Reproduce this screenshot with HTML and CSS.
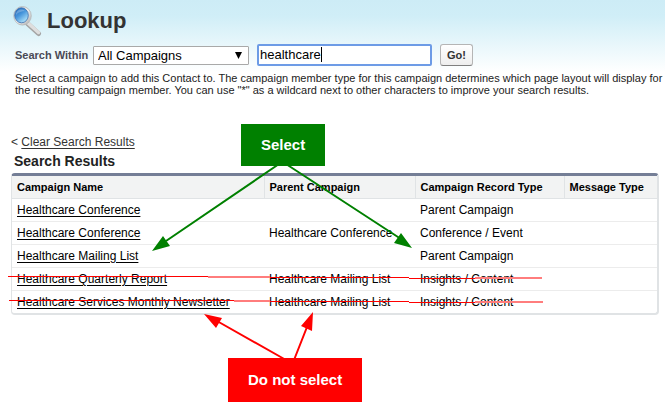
FILE: index.html
```html
<!DOCTYPE html>
<html lang="en">
<head>
<meta charset="utf-8">
<meta name="viewport" content="width=device-width, initial-scale=1">
<title>Lookup</title>
<link rel="stylesheet" href="styles.css">
</head>
<body>
<header class="lookup">
  <div class="title-row">
    <svg class="lens" viewBox="0 0 32 32" aria-hidden="true">
      <defs>
        <linearGradient id="glass" x1="0" y1="0" x2="0.7" y2="1">
          <stop offset="0" stop-color="#1c5fb0"/>
          <stop offset="0.5" stop-color="#4796dc"/>
          <stop offset="1" stop-color="#b4e6fa"/>
        </linearGradient>
        <linearGradient id="metal" x1="0" y1="0" x2="1" y2="1">
          <stop offset="0" stop-color="#c8ccd0"/>
          <stop offset="0.5" stop-color="#f0f0f0"/>
          <stop offset="1" stop-color="#a8a8a8"/>
        </linearGradient>
      </defs>
      <path d="M16 19 26.500 28.500" stroke="#a4a4a4" stroke-width="5" stroke-linecap="round"/>
      <path d="M16 18 26.500 27.500" stroke="#dedede" stroke-width="3.500" stroke-linecap="round"/>
      <ellipse cx="10.500" cy="10.800" rx="8.800" ry="9.300" fill="url(#metal)" stroke="#b4b6b8" stroke-width=".8"/>
      <ellipse cx="9.500" cy="10.300" rx="6.800" ry="7.500" fill="url(#glass)" stroke="#3b6fb0" stroke-width=".8"/>
      <path d="M4 10C4 5 9 3 13 6 10 6 6 7 4 10Z" fill="#fff" opacity=".25"/>
    </svg>
    <h1>Lookup</h1>
  </div>
  <form class="search">
    <label for="scope">Search Within</label>
    <span class="select-wrap">
      <select id="scope"><option>All Campaigns</option></select>
      <svg class="caret" viewBox="0 0 8 7" aria-hidden="true"><path d="M0 0h7L3.500 7Z"/></svg>
    </span>
    <input class="query" type="text" value="healthcare" aria-label="Search text">
    <button type="button">Go!</button>
  </form>
  <p class="hint">Select a campaign to add this Contact to. The campaign member type for this campaign determines which page layout will display for the resulting campaign member. You can use "*" as a wildcard next to other characters to improve your search results.</p>
</header>
<main class="results">
  <p class="clear">&lt; <a href="#">Clear Search Results</a></p>
  <h2>Search Results</h2>
  <div class="frame">
    <table>
      <colgroup><col class="c-name"><col class="c-parent"><col class="c-type"><col></colgroup>
      <thead>
        <tr><th scope="col">Campaign Name</th><th scope="col">Parent Campaign</th><th scope="col">Campaign Record Type</th><th scope="col">Message Type</th></tr>
      </thead>
      <tbody>
        <tr><td><a href="#">Healthcare Conference</a></td><td></td><td>Parent Campaign</td><td></td></tr>
        <tr><td><a href="#">Healthcare Conference</a></td><td>Healthcare Conference</td><td>Conference / Event</td><td></td></tr>
        <tr><td><a href="#">Healthcare Mailing List</a></td><td></td><td>Parent Campaign</td><td></td></tr>
        <tr><td><a href="#">Healthcare Quarterly Report</a></td><td>Healthcare Mailing List</td><td>Insights / Content</td><td></td></tr>
        <tr><td><a href="#">Healthcare Services Monthly Newsletter</a></td><td>Healthcare Mailing List</td><td>Insights / Content</td><td></td></tr>
      </tbody>
    </table>
  </div>
</main>
<svg class="marks" viewBox="0 0 665 414" aria-hidden="true">
  <g stroke="#008000" stroke-width="2" fill="#008000">
    <path d="M279 164 166 241M286 164 401 239"/>
    <path stroke="none" d="M152 251 163 236 170 246ZM412 248 394 243 401 233Z"/>
  </g>
  <g stroke="#f00" stroke-width="2" fill="#f00">
    <path d="M286 360 217 321M294 360 307 327"/>
    <path stroke="none" d="M204 314 222 318 216 328ZM313 312 301 326 312 331Z"/>
  </g>
  <g stroke="#f00" fill="none">
    <path d="M8 276.500H208M270 277.500H409M409 278.500H475M9 300.500H234M270 301.500H409M409 302.500H475"/>
    <path stroke="#ff7d7d" stroke-width="2" d="M208 277H270M475 278H542M234 301H270M475 302H543"/>
  </g>
</svg>
<div class="callout yes">Select</div>
<div class="callout no">Do not select</div>
<svg class="text-caret" viewBox="0 0 1 15" aria-hidden="true"><path d="M0 0h1v15H0Z"/></svg>
</body>
</html>
```

FILE: styles.css
```css
* { box-sizing: border-box; }

body {
  margin: 0;
  min-height: 100vh;
  position: relative;
  background: #fff linear-gradient(#cdecf6, #d0eef7 16px, #fff 72px) no-repeat;
  color: #222;
  font-family: "Liberation Sans", Arial, sans-serif;
  font-size: 12px;
}

.lookup { padding: 4px 0 0 15px; }

.title-row { display: flex; align-items: center; height: 34px; }
.lens { width: 32px; height: 32px; margin-left: -3px; }
h1 { margin: 0 0 0 3px; font-size: 22px; line-height: 24px; color: #333; }

.search { display: flex; align-items: center; height: 24px; margin-top: 5px; }
.search label {
  width: 78px;
  font-size: 11px;
  font-weight: bold;
  color: #4a4a56;
  white-space: nowrap;
}
.select-wrap { position: relative; width: 156px; }
select {
  display: block;
  width: 100%;
  height: 19px;
  padding: 0 4px;
  appearance: none;
  border: 1px solid #a9a9a9;
  border-radius: 1px;
  background: #fff;
  color: #000;
  font: 13px/17px "Liberation Sans", Arial, sans-serif;
}
.caret { position: absolute; right: 6px; top: 6px; width: 8px; height: 7px; pointer-events: none; }
.query {
  width: 175px;
  height: 22px;
  margin-left: 8px;
  padding: 0 1px 2px;
  border: 2px solid #6d9be6;
  border-radius: 2px;
  outline: 0;
  background: #fff;
  color: #000;
  font: 13px/16px "Liberation Sans", Arial, sans-serif;
}
button {
  width: 33px;
  height: 22px;
  margin-left: 8px;
  padding: 0;
  border: 1px solid #b5b5b5;
  border-bottom-color: #7f7f7f;
  border-radius: 3px;
  background: linear-gradient(#fff, #eee);
  color: #333;
  font: bold 11px "Liberation Sans", Arial, sans-serif;
}
.hint { margin: 5px 0 0; font-size: 11px; line-height: 12px; }

.results { padding: 38px 6px 0 11px; }
.clear { margin: 0; line-height: 16px; color: #333; }
.clear a { color: #333; text-underline-offset: 2px; }
h2 { margin: 3px 0 4px 3px; font-size: 14px; line-height: 16px; }

.frame {
  border: 2px solid #e0e3e5;
  border-top: 3px solid #747e96;
  border-left-width: 1px;
  border-radius: 4px;
}
table { width: 100%; border-collapse: collapse; table-layout: fixed; color: #000; }
.c-name { width: 252px; }
.c-parent { width: 151px; }
.c-type { width: 149px; }
th, td { height: 23px; padding: 0 5px; text-align: left; white-space: nowrap; line-height: 16px; }
th {
  height: 22px;
  background: #f2f3f3;
  border-bottom: 1px solid #e0e3e5;
  border-left: 1px solid #e0e3e5;
  font-size: 11px;
}
td { border-bottom: 1px solid #ececec; }
th:first-child { border-left: 0; }
tbody tr:last-child td { border-bottom: 0; }
td a { color: #000; text-underline-offset: 2px; }

.marks { position: absolute; left: 0; top: 0; width: 665px; height: 414px; pointer-events: none; }
.text-caret { position: absolute; left: 321px; top: 47px; width: 1px; height: 15px; pointer-events: none; }
.callout {
  position: absolute;
  padding: 0 20px;
  color: #fff;
  font-size: 15px;
  font-weight: bold;
  text-align: center;
  white-space: nowrap;
}
.yes { left: 241px; top: 124px; line-height: 42px; background: #008000; }
.no { left: 228px; top: 358px; line-height: 44px; background: #f00; }
```
